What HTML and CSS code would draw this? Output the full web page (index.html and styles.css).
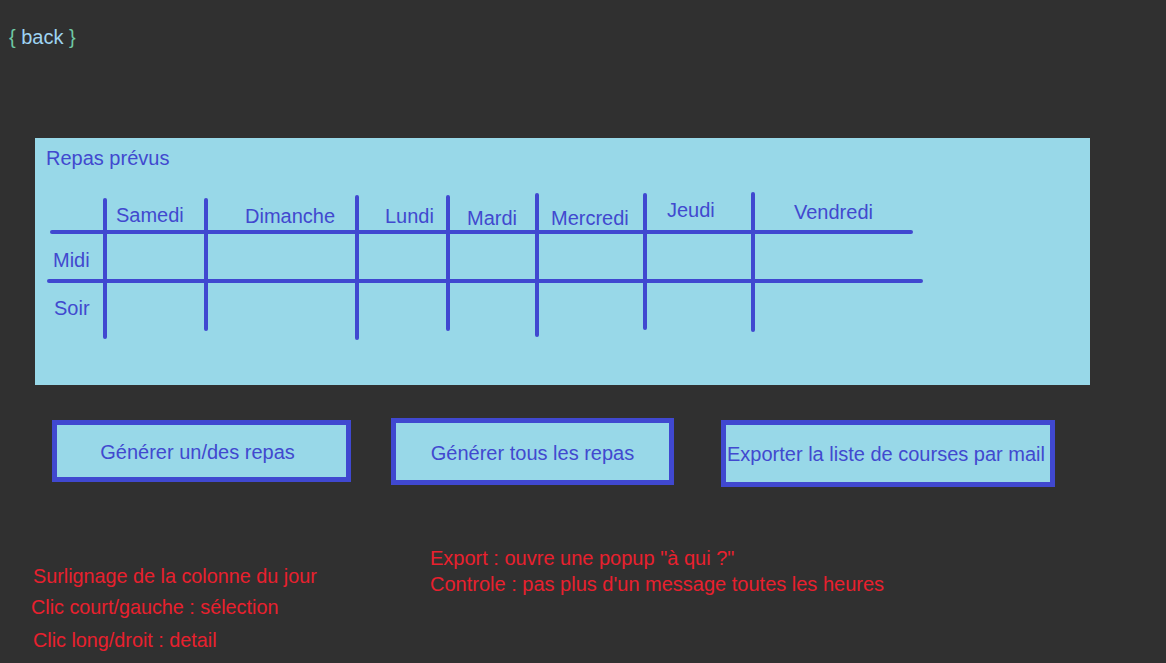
FILE: index.html
```html
<!DOCTYPE html>
<html lang="fr">
<head>
  <meta charset="UTF-8"/>
  <meta name="viewport" content="width=device-width, initial-scale=1.0"/>
  <title>Repas prévus</title>
  <link rel="stylesheet" href="styles.css">
</head>
<body>

<div class="back-link" onclick="history.back()"><span class="brace">{</span> back <span class="brace">}</span></div>

<div class="planning">
  <h2 class="planning-title">Repas prévus</h2>

  <!-- grille dessinée a la main -->
  <svg class="grid" width="1055" height="216" viewBox="35 169 1055 216">
    <line x1="52" y1="232" x2="911" y2="232"/>
    <line x1="49" y1="281" x2="921" y2="281"/>
    <line x1="105" y1="200" x2="105" y2="337"/>
    <line x1="206" y1="200" x2="206" y2="329"/>
    <line x1="357" y1="197" x2="357" y2="338"/>
    <line x1="448" y1="197" x2="448" y2="329"/>
    <line x1="537" y1="195" x2="537" y2="335"/>
    <line x1="645" y1="195" x2="645" y2="328"/>
    <line x1="753" y1="194" x2="753" y2="330"/>

    <text x="116" y="222">Samedi</text>
    <text x="245" y="223">Dimanche</text>
    <text x="385" y="223">Lundi</text>
    <text x="467" y="225">Mardi</text>
    <text x="551" y="225">Mercredi</text>
    <text x="667" y="217">Jeudi</text>
    <text x="794" y="219">Vendredi</text>
    <text x="53" y="267">Midi</text>
    <text x="54" y="315">Soir</text>
  </svg>
</div>

<div class="actions">
  <button class="action-button btn-one">Générer un/des repas</button>
  <button class="action-button btn-all">Générer tous les repas</button>
  <button class="action-button btn-export">Exporter la liste de courses par mail</button>
</div>

<div class="notes">
  <div class="notes-left">
    <p class="note shift">Surlignage de la colonne du jour</p>
    <p class="note second">Clic court/gauche : sélection</p>
    <p class="note third shift">Clic long/droit : detail</p>
  </div>
  <div class="notes-right">
    <p class="note">Export : ouvre une popup "à qui ?"</p>
    <p class="note next">Controle : pas plus d'un message toutes les heures</p>
  </div>
</div>

</body>
</html>
```

FILE: styles.css
```css
body {
  font-family: 'Liberation Sans', Arial, sans-serif;
  font-size: 20px;
  line-height: 22px;
  margin: 0;
  background-color: #303030;
  min-height: 663px;
}

.back-link {
  padding: 26px 0 0 9px;
  color: #9fd4f2;
  cursor: pointer;
  width: 70px;
}

.brace {
  color: #6fc8a4;
  font-weight: 300;
}

.planning {
  margin: 90px 0 0 35px;
  width: 1055px;
  height: 247px;
  background-color: #98d8e8;
}

.planning-title {
  margin: 0;
  padding: 9px 0 0 11px;
  font-size: 20px;
  font-weight: normal;
  line-height: 22px;
  color: #4149cf;
}

.grid {
  display: block;
}

.grid line {
  stroke: #4048d0;
  stroke-width: 4;
  stroke-linecap: round;
}

.grid text {
  font-family: 'Liberation Sans', Arial, sans-serif;
  font-size: 20px;
  fill: #4149cf;
}

.actions {
  display: flex;
  align-items: flex-start;
  margin-top: 33px;
  padding-left: 52px;
}

.action-button {
  background-color: #98d8e8;
  border: 5px solid #4048d0;
  color: #4149cf;
  font-family: 'Liberation Sans', Arial, sans-serif;
  font-size: 20px;
  padding: 0;
  text-align: center;
  white-space: nowrap;
  cursor: pointer;
}

.btn-one {
  margin-top: 2px;
  width: 299px;
  height: 62px;
  padding: 2px 8px 0 0;
}

.btn-all {
  margin-left: 40px;
  width: 283px;
  height: 67px;
  padding-top: 4px;
}

.btn-export {
  margin-left: 47px;
  margin-top: 2px;
  width: 334px;
  height: 67px;
  padding: 1px 4px 0 0;
}

.notes {
  display: flex;
  margin-top: 60px;
  color: #e8202e;
}

.notes-left {
  width: 399px;
  padding: 18px 0 0 31px;
  font-size: 19.8px;
}

.notes-right {
  font-size: 20px;
}

.note {
  margin: 0;
  line-height: 22px;
}

.shift {
  padding-left: 2px;
}

.second {
  margin-top: 9px;
}

.third {
  margin-top: 11px;
}

.next {
  margin-top: 4px;
}
```
